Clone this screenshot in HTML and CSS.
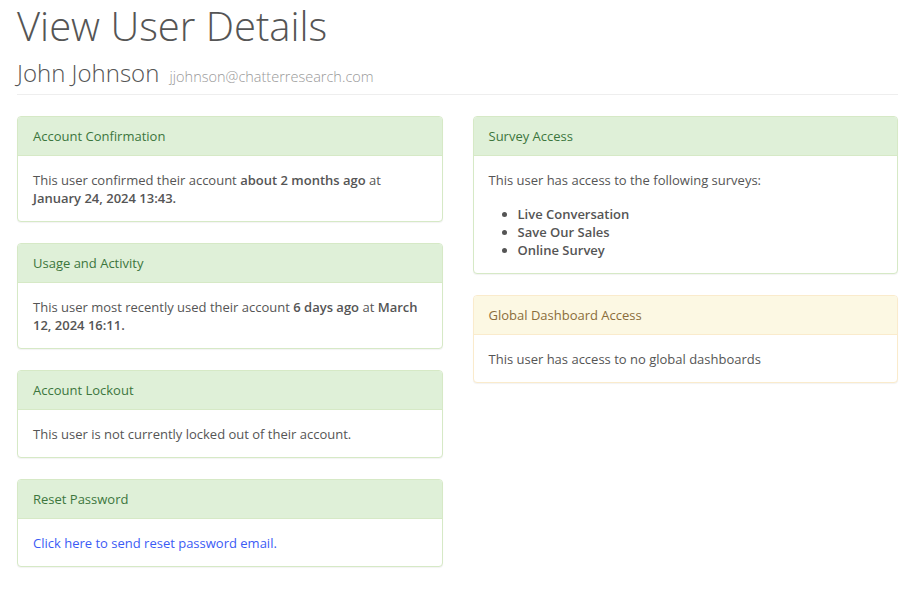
FILE: index.html
```html
<!DOCTYPE html>
<html lang="en">

<head>
    <meta charset="UTF-8">
    <title>View User Details</title>
    <link rel="stylesheet" href="styles.css">
</head>

<body>
    <div class="page">

        <div class="page_header">
            <h1>View User Details</h1>
            <h2>John Johnson <small>jjohnson@chatterresearch.com</small></h2>
        </div>

        <div class="row">

            <div class="col">
                <div class="panel panel_success">
                    <div class="panel_heading">Account Confirmation</div>
                    <div class="panel_body">
                        This user confirmed their account <b>about 2 months ago</b> at
                        <b>January 24, 2024 13:43.</b>
                    </div>
                </div>

                <div class="panel panel_success">
                    <div class="panel_heading">Usage and Activity</div>
                    <div class="panel_body">
                        This user most recently used their account <b>6 days ago</b> at <b>March 12, 2024 16:11.</b>
                    </div>
                </div>

                <div class="panel panel_success">
                    <div class="panel_heading">Account Lockout</div>
                    <div class="panel_body">
                        This user is not currently locked out of their account.
                    </div>
                </div>

                <div class="panel panel_success">
                    <div class="panel_heading">Reset Password</div>
                    <div class="panel_body">
                        <a href="#">Click here to send reset password email.</a>
                    </div>
                </div>
            </div>

            <div class="col">
                <div class="panel panel_success">
                    <div class="panel_heading">Survey Access</div>
                    <div class="panel_body">
                        <p>This user has access to the following surveys:</p>
                        <ul>
                            <li><b>Live Conversation</b></li>
                            <li><b>Save Our Sales</b></li>
                            <li><b>Online Survey</b></li>
                        </ul>
                    </div>
                </div>

                <div class="panel panel_warning">
                    <div class="panel_heading">Global Dashboard Access</div>
                    <div class="panel_body">
                        This user has access to no global dashboards
                    </div>
                </div>
            </div>

        </div>

    </div>
</body>

</html>
```

FILE: styles.css
```css
body {
    margin: 0;
    font-family: "Open Sans", "Liberation Sans", sans-serif;
    font-size: 13px;
    line-height: 18px;
    color: #555555;
    background-color: white;
}

.page {
    padding: 0 20px 0 17px;
}

.page_header {
    border-bottom: 1px solid #EEEEEE;
    padding-bottom: 5px;
    margin-bottom: 21px;
}

.page_header h1 {
    margin: 0 0 7px;
    padding-top: 2px;
    font-size: 40px;
    font-weight: 300;
    line-height: 48px;
}

.page_header h2 {
    margin: 0;
    font-size: 24px;
    font-weight: 300;
    line-height: 32px;
}

.page_header small {
    margin-left: 4px;
    font-size: 14.5px;
    line-height: 1;
    color: #999999;
}

.row {
    display: grid;
    grid-template-columns: 1fr 1fr;
    gap: 30px;
    align-items: start;
}

.panel {
    border: 1px solid #DDDDDD;
    border-radius: 4px;
    background-color: white;
    box-shadow: 0 1px 1px rgba(0, 0, 0, .05);
    margin-bottom: 21px;
}

.panel_heading {
    padding: 10px 15px;
    border-bottom: 1px solid transparent;
    border-radius: 3px 3px 0 0;
}

.panel_body {
    padding: 15px 15px 14px;
}

.panel_body b {
    font-weight: 600;
}

.panel_body p {
    margin: 0 0 16px;
}

.panel_body ul {
    margin: 0;
    padding-left: 29px;
}

.panel_body a {
    color: #3B5BF5;
    text-decoration: none;
}

.panel_success {
    border-color: #D6E9C6;
}

.panel_success>.panel_heading {
    color: #3C763D;
    background-color: #DFF0D8;
    border-color: #D6E9C6;
}

.panel_warning {
    border-color: #FAEBCC;
}

.panel_warning>.panel_heading {
    color: #8A6D3B;
    background-color: #FCF8E3;
    border-color: #FAEBCC;
}
```
